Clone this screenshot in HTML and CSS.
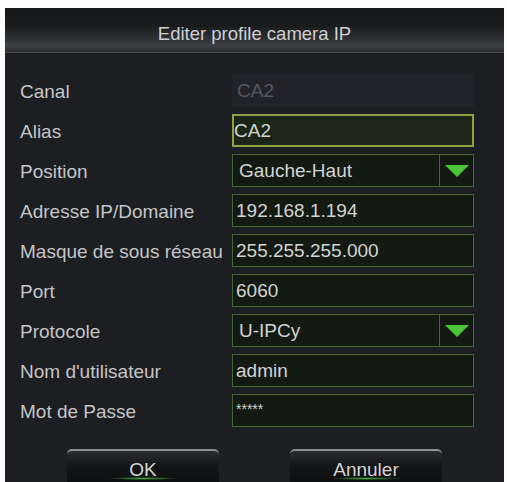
FILE: index.html
```html
<!DOCTYPE html>
<html lang="fr">
<head>
<meta charset="utf-8">
<title>Editer profile camera IP</title>
<link rel="stylesheet" href="styles.css">
</head>
<body>
<div class="dialog">
  <div class="titlebar">Editer profile camera IP</div>
  <div class="body">
    <div class="form">
      <div class="label">Canal</div>
      <div class="field disabled">CA2</div>

      <div class="label">Alias</div>
      <div class="field focus">CA2</div>

      <div class="label">Position</div>
      <div class="field select"><span class="val">Gauche-Haut</span><span class="arrow"><svg width="24" height="14" viewBox="0 0 24 14"><polygon points="0,1 24,1 12,13" fill="#4cc43a"/></svg></span></div>

      <div class="label">Adresse IP/Domaine</div>
      <div class="field">192.168.1.194</div>

      <div class="label">Masque de sous réseau</div>
      <div class="field">255.255.255.000</div>

      <div class="label">Port</div>
      <div class="field">6060</div>

      <div class="label">Protocole</div>
      <div class="field select"><span class="val">U-IPCy</span><span class="arrow"><svg width="24" height="14" viewBox="0 0 24 14"><polygon points="0,1 24,1 12,13" fill="#4cc43a"/></svg></span></div>

      <div class="label">Nom d'utilisateur</div>
      <div class="field">admin</div>

      <div class="label">Mot de Passe</div>
      <div class="field pass">*****</div>
    </div>
    <div class="buttons">
      <div class="btn">OK</div>
      <div class="btn">Annuler</div>
    </div>
  </div>
</div>
</body>
</html>
```

FILE: styles.css
```css
html, body {
  margin: 0;
  padding: 0;
  background: #fdfdfd;
  overflow: hidden;
}
body {
  width: 507px;
  height: 482px;
  font-family: "Liberation Sans", Arial, sans-serif;
}
.dialog {
  margin: 8px 0 0 5px;
  width: 499px;
  height: 490px;
  background: #1c1e21;
  display: flex;
  flex-direction: column;
}
.titlebar {
  height: 45px;
  box-sizing: border-box;
  padding-top: 15px;
  text-align: center;
  font-size: 18.5px;
  color: #cfd0d2;
  background: linear-gradient(to bottom, #17181a 0%, #1a1b1d 40%, #2e3134 70%, #3d4043 85%, #2c2e31 100%);
  border-bottom: 1px solid #45484b;
}
.body {
  padding: 21px 30px 0 15px;
  display: flex;
  flex-direction: column;
}
.form {
  display: grid;
  grid-template-columns: 212px 242px;
  grid-auto-rows: 33px;
  row-gap: 7px;
  align-items: center;
}
.label {
  font-size: 19px;
  color: #c4c5c7;
  white-space: nowrap;
  padding-top: 2px;
}
.field {
  height: 33px;
  box-sizing: border-box;
  border: 1px solid #45663a;
  background: #131a12;
  color: #d2d3d3;
  font-size: 19px;
  padding: 0 3px;
  display: flex;
  align-items: center;
}
.field.disabled {
  border-color: transparent;
  background: #222329;
  color: #55565c;
  padding-left: 4px;
}
.field.focus {
  border: 2px solid #8fa046;
  background: #1b2616;
  padding-left: 0;
}
.field.select {
  padding: 0;
}
.field.select .val {
  flex: 1;
  padding-left: 6px;
}
.field.select .arrow {
  width: 33px;
  height: 100%;
  border-left: 1px solid #45663a;
  display: flex;
  align-items: center;
  justify-content: center;
}
.field.pass {
  font-size: 14px;
  align-items: flex-start;
  padding-top: 6px;
}
.buttons {
  margin-top: 22px;
  display: flex;
  justify-content: center;
  gap: 71px;
  padding-left: 15px;
}
.btn {
  position: relative;
  width: 152px;
  height: 40px;
  box-sizing: border-box;
  border-top: 2px solid #8c8f92;
  border-radius: 5px 5px 0 0;
  background: linear-gradient(to bottom, #2b2d30 0%, #141516 40%, #0c0d0e 100%);
  color: #d3d4d5;
  font-size: 19px;
  text-align: center;
  padding-top: 8px;
}
.btn::after {
  content: "";
  position: absolute;
  left: 50%;
  bottom: 9px;
  width: 70px;
  height: 3px;
  margin-left: -35px;
  background: radial-gradient(ellipse at center, rgba(70, 190, 60, 0.9) 0%, rgba(70, 190, 60, 0) 70%);
}
```
